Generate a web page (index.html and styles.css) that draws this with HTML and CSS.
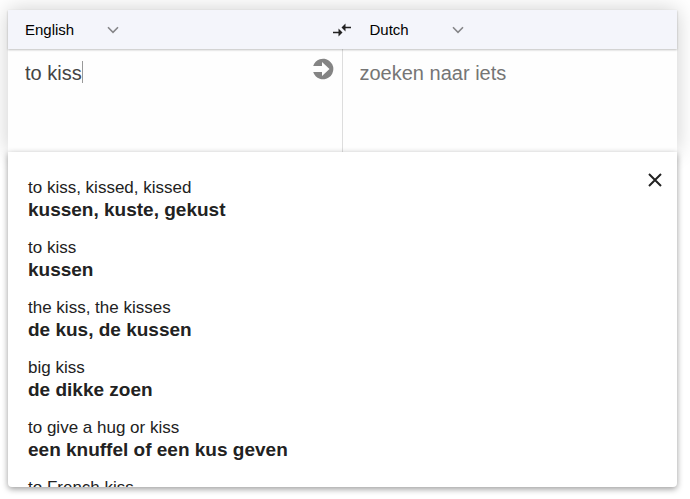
FILE: index.html
```html
<!DOCTYPE html>
<html lang="en">
<head>
    <meta charset="UTF-8">
    <meta name="viewport" content="width=device-width, initial-scale=1.0">
    <title>English - Dutch Dictionary</title>
    <link rel="stylesheet" href="styles.css">
</head>
<body>
    <main class="translator">
        <form class="search">
            <div class="languages">
                <div class="language">
                    <select class="language-select" aria-label="Source language">
                        <option selected>English</option>
                        <option>Dutch</option>
                    </select>
                    <svg class="chevron" viewBox="0 0 12 8" aria-hidden="true">
                        <path d="M1 1.3l5 5 5-5" />
                    </svg>
                    <button type="button" class="swap" aria-label="Swap languages">
                        <svg viewBox="0 0 20 14" aria-hidden="true">
                            <path d="M1 9.5h8M19 4.5h-8" fill="none" stroke="currentColor" stroke-width="1.6" />
                            <path d="M6.5 5.5l4 4-4 4zM13.5 .5l-4 4 4 4z" fill="currentColor" />
                        </svg>
                    </button>
                </div>
                <div class="language">
                    <select class="language-select" aria-label="Target language">
                        <option>English</option>
                        <option selected>Dutch</option>
                    </select>
                    <svg class="chevron" viewBox="0 0 12 8" aria-hidden="true">
                        <path d="M1 1.3l5 5 5-5" />
                    </svg>
                </div>
            </div>
            <div class="fields">
                <div class="field source">
                    <input type="text" class="word" aria-label="English text" value="to kiss">
                    <span class="caret"></span>
                    <button type="submit" class="go" aria-label="Search">
                        <svg viewBox="0 0 22 22" aria-hidden="true">
                            <path d="M1.2 8A10.3 10.3 0 1 1 1.2 14H10v4l7.5-7L10 4v4z" fill="#848484" />
                        </svg>
                    </button>
                </div>
                <div class="field">
                    <input type="text" class="word" aria-label="Dutch text" placeholder="zoeken naar iets">
                </div>
            </div>
        </form>

        <section class="results">
            <button type="button" class="close" aria-label="Close">
                <svg viewBox="0 0 14 14" aria-hidden="true">
                    <path d="M1 1l12 12M13 1L1 13" />
                </svg>
            </button>
            <dl class="result-list">
                <div class="result">
                    <dt>to kiss, kissed, kissed</dt>
                    <dd>kussen, kuste, gekust</dd>
                </div>
                <div class="result">
                    <dt>to kiss</dt>
                    <dd>kussen</dd>
                </div>
                <div class="result">
                    <dt>the kiss, the kisses</dt>
                    <dd>de kus, de kussen</dd>
                </div>
                <div class="result">
                    <dt>big kiss</dt>
                    <dd>de dikke zoen</dd>
                </div>
                <div class="result">
                    <dt>to give a hug or kiss</dt>
                    <dd>een knuffel of een kus geven</dd>
                </div>
                <div class="result">
                    <dt>to French kiss</dt>
                </div>
            </dl>
        </section>
    </main>
</body>
</html>
```
FILE: styles.css
```css
* {
    box-sizing: border-box;
}

body {
    margin: 0;
    background-color: #fff;
    color: #222;
    font-family: "Liberation Sans", Arial, sans-serif;
}

.translator {
    display: flex;
    flex-direction: column;
    height: 100vh;
    padding: 10px 13px 12px 8px;
}

button {
    display: flex;
    padding: 0;
    border: none;
    background: none;
    color: inherit;
    cursor: pointer;
}

.search {
    background-color: #fefefe;
    box-shadow: 0 0 20px rgba(0, 0, 0, 0.2);
}

.languages,
.fields {
    display: grid;
    grid-template-columns: 1fr 1fr;
}

.languages {
    position: relative;
    height: 39px;
    background-color: #f4f5fb;
    box-shadow: 0 1px 2px rgba(0, 0, 0, 0.25);
}

.language {
    display: flex;
    align-items: center;
    padding-left: 17px;
}

.language + .language {
    padding-left: 27px;
}

.language-select {
    appearance: none;
    width: 82px;
    padding: 0;
    border: none;
    background: none;
    color: #000;
    font-family: inherit;
    font-size: 15px;
}

.chevron {
    width: 12px;
    height: 8px;
    fill: none;
    stroke: #858588;
    stroke-width: 1.6;
}

.swap {
    margin-left: auto;
    margin-right: -9px;
}

.swap svg {
    width: 20px;
    height: 14px;
}

.fields {
    height: 103px;
}

.field {
    display: flex;
    align-items: flex-start;
    padding: 12px 8px 0 17px;
}

.source {
    border-right: 1px solid #ddd;
}

.word {
    width: 100%;
    height: 24px;
    padding: 0;
    border: none;
    outline: none;
    background: none;
    color: #444;
    font-family: inherit;
    font-size: 20px;
}

.source .word {
    width: auto;
    field-sizing: content;
}

.word::placeholder {
    color: #757575;
}

.caret {
    width: 1px;
    height: 22px;
    background-color: #999;
}

.go {
    margin-left: auto;
    margin-top: -3px;
}

.go svg {
    width: 22px;
    height: 22px;
}

.results {
    position: relative;
    flex: 1;
    min-height: 0;
    overflow: hidden;
    padding: 25px 20px 0;
    border-radius: 0 0 4px 4px;
    background-color: #fff;
    box-shadow: 0 2px 6px rgba(0, 0, 0, 0.4);
}

.close {
    position: absolute;
    top: 21px;
    right: 15px;
}

.close svg {
    width: 14px;
    height: 14px;
    fill: none;
    stroke: #222;
    stroke-width: 2;
}

.result-list {
    display: flex;
    flex-direction: column;
    gap: 16px;
    margin: 0;
}

.result {
    line-height: 22px;
}

.result dt {
    font-size: 17px;
}

.result dd {
    margin: 0;
    font-size: 19px;
    font-weight: bold;
}
```
